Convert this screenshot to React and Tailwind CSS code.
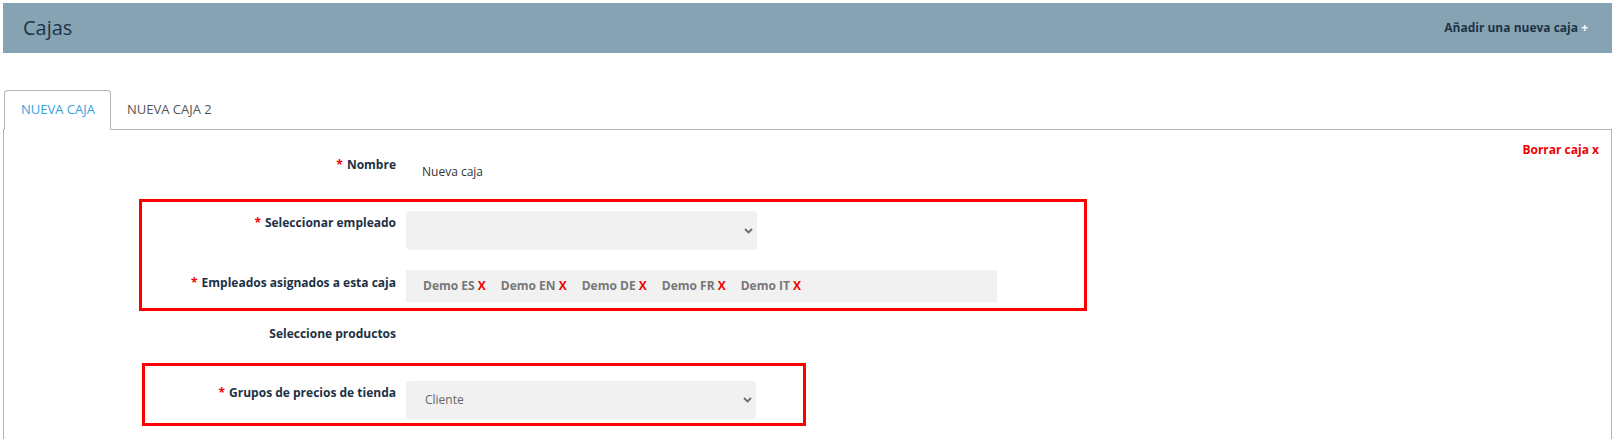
import React from "react";

const employees = ["Demo ES", "Demo EN", "Demo DE", "Demo FR", "Demo IT"];

const Chevron = () => (
  <svg width="9" height="6" viewBox="0 0 9 6" className="shrink-0">
    <polyline points="1,1 4.5,4.5 8,1" fill="none" stroke="#6b6b6b" strokeWidth="1.8" />
  </svg>
);

const Label = ({ text, required, width, pt = "pt-0" }) => (
  <div className={`${width} ${pt} shrink-0 text-right text-[12px] leading-[18px] font-bold text-[#1c3144]`}>
    {required && <span className="text-[#f00000] mr-1">*</span>}
    {text}
  </div>
);

const Select = ({ value, width, height }) => (
  <div className={`${width} ${height} flex items-center justify-between bg-[#f1f1f1] rounded-[4px] pl-[19px] pr-[4px] text-[12px] text-[#666]`}>
    <span>{value}</span>
    <Chevron />
  </div>
);

export default function App() {
  return (
    <div className="min-h-[439px] bg-white pl-[3px] pr-[9px] pt-[3px] font-['Open_Sans',sans-serif]">
      {/* header */}
      <div className="h-[50px] bg-[#86a3b4] flex items-center justify-between pl-[20px] pr-[24px]">
        <h1 className="text-[20px] text-[#1d3446]">Cajas</h1>
        <button className="text-[12px] font-bold text-[#1d3446]">
          Añadir una nueva caja <span className="text-white">+</span>
        </button>
      </div>

      {/* tabs */}
      <div className="mt-[37px] flex text-[13px] relative z-10 -mb-px">
        <div className="ml-px h-[40px] px-[15px] pl-[16px] flex items-center border border-[#b3b3b3] border-b-white bg-white rounded-t-[4px] text-[#39a2dd]">
          NUEVA CAJA
        </div>
        <div className="h-[40px] px-[16px] flex items-center text-[#555]">NUEVA CAJA 2</div>
      </div>

      {/* panel */}
      <div className="border border-b-0 border-[#b3b3b3] min-h-[310px] pt-[11px]">
        <div className="float-right pr-[12px] text-[12px] leading-[18px] font-bold text-[#f00000]">Borrar caja x</div>

        <div className="mt-[15px] flex gap-[10px]">
          <Label text="Nombre" required width="w-[392px]" />
          <div className="pt-[7px] pl-[16px] text-[12px] leading-[18px] text-[#333]">Nueva caja</div>
        </div>

        <div className="mt-[18px] ml-[135px] w-[948px] border-[3px] border-[#ff0000] pt-[9px] pb-[6px]">
          <div className="flex gap-[10px]">
            <Label text="Seleccionar empleado" required width="w-[254px]" pt="pt-[3px]" />
            <Select value="" width="w-[351px]" height="h-[39px]" />
          </div>
          <div className="mt-[20px] flex gap-[10px]">
            <Label text="Empleados asignados a esta caja" required width="w-[254px]" pt="pt-[4px]" />
            <div className="w-[591px] h-[32px] bg-[#f1f1f1] flex items-center gap-[15px] pl-[17px] text-[12px] font-bold text-[#777]">
              {employees.map((e) => (
                <span key={e}>
                  {e} <span className="text-[#f00000]">X</span>
                </span>
              ))}
            </div>
          </div>
        </div>

        <div className="mt-[14px] flex">
          <Label text="Seleccione productos" width="w-[392px]" />
        </div>

        <div className="mt-[20px] ml-[138px] w-[664px] border-[3px] border-[#ff0000] pt-[15px] pb-[4px]">
          <div className="flex gap-[10px]">
            <Label text="Grupos de precios de tienda" required width="w-[251px]" pt="pt-[3px]" />
            <Select value="Cliente" width="w-[350px]" height="h-[38px]" />
          </div>
        </div>
      </div>
    </div>
  );
}
